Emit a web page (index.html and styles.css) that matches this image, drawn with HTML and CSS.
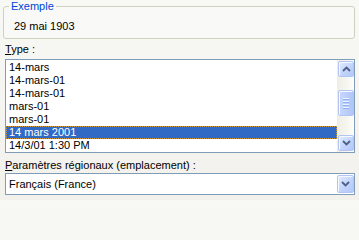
FILE: index.html
```html
<!DOCTYPE html>
<html lang="fr">
<head>
<meta charset="utf-8">
<title>Format de date</title>
<link rel="stylesheet" href="styles.css">
</head>
<body>
<div class="dlg">
  <fieldset class="sample">
    <legend>Exemple</legend>
    <div class="sample-text">29 mai 1903</div>
  </fieldset>
  <div class="label label-type"><u>T</u>ype :</div>
  <div class="listbox">
    <ul class="items">
      <li>14-mars</li>
      <li>14-mars-01</li>
      <li>14-mars-01</li>
      <li>mars-01</li>
      <li>mars-01</li>
      <li class="sel">14 mars 2001</li>
      <li>14/3/01 1:30 PM</li>
    </ul>
    <div class="vscroll">
      <div class="sbtn sbtn-up"><svg width="9" height="6" viewBox="0 0 9 6"><path d="M1 5 L4.5 1.5 L8 5" fill="none" stroke="#4d6185" stroke-width="1.8"/></svg></div>
      <div class="track">
        <div class="thumb"><span></span><span></span><span></span><span></span></div>
      </div>
      <div class="sbtn sbtn-down"><svg width="9" height="6" viewBox="0 0 9 6"><path d="M1 1 L4.5 4.5 L8 1" fill="none" stroke="#4d6185" stroke-width="1.8"/></svg></div>
    </div>
  </div>
  <div class="label label-region"><u>P</u>aramètres régionaux (emplacement) :</div>
  <div class="combo">
    <span class="combo-text">Français (France)</span>
    <div class="cbtn"><svg width="9" height="6" viewBox="0 0 9 6"><path d="M1 1 L4.5 4.5 L8 1" fill="none" stroke="#4d6185" stroke-width="1.8"/></svg></div>
  </div>
</div>
</body>
</html>
```
FILE: styles.css
```css
html, body {
  margin: 0;
  padding: 0;
}
body {
  width: 359px;
  height: 200px;
  overflow: hidden;
  background: linear-gradient(#f8f8f5, #f2f1ec);
  font-family: "Liberation Sans", Arial, sans-serif;
  font-size: 11px;
  line-height: 13px;
  color: #000;
}
.dlg {
  padding: 0 4px 0 3px;
}
.sample {
  margin: 0;
  padding: 0 0 5px 5px;
  border: 1px solid #d0d0bf;
  border-radius: 3px;
  background: #f9f9f7;
  min-width: 0;
}
.sample legend {
  padding: 0 2px;
  color: #0046d5;
  line-height: 13px;
}
.sample-text {
  padding: 7px 0 0 5px;
  height: 13px;
}
.label {
  padding-left: 2px;
  height: 13px;
}
.label-type {
  margin-top: 4px;
}
.label-region {
  margin-top: 6px;
}
.label u {
  text-decoration: underline;
  text-underline-offset: 1px;
}
.listbox {
  margin: 3px 0 0 2px;
  border: 1px solid #7f9db9;
  background: #fff;
  height: 92px;
  display: flex;
}
.items {
  list-style: none;
  margin: 0;
  padding: 1px 0 0 0;
  flex: 1;
  min-width: 0;
}
.items li {
  height: 13px;
  line-height: 13px;
  padding-left: 3px;
  white-space: nowrap;
  box-sizing: border-box;
}
.items li.sel {
  background: #316ac5;
  color: #fff;
  border: 1px dotted #d4963a;
  padding-left: 2px;
  line-height: 11px;
}
.vscroll {
  width: 17px;
  display: flex;
  flex-direction: column;
  background: linear-gradient(to right, #eeede5, #fdfdfa);
}
.sbtn {
  width: 14px;
  height: 14px;
  border: 1px solid #b2c5f3;
  border-radius: 2px;
  background: linear-gradient(135deg, #e4ecfe, #c0d2fc 60%, #b4c8f8);
  display: flex;
  align-items: center;
  justify-content: center;
  box-shadow: inset 1px 1px 0 #f4f8ff;
}
.sbtn-up {
  margin: 1px 1px 0 1px;
}
.sbtn-down {
  margin: 0 1px 1px 1px;
}
.track {
  flex: 1;
  display: flex;
  flex-direction: column;
}
.thumb {
  margin: 13px 1px 0 1px;
  width: 14px;
  height: 24px;
  border: 1px solid #b2c5f3;
  border-radius: 2px;
  background: linear-gradient(to right, #c9d8fc, #bccefb 50%, #b0c5f8);
  box-shadow: inset 1px 1px 0 #f4f8ff;
  display: flex;
  flex-direction: column;
  align-items: center;
  justify-content: center;
  gap: 1px;
}
.thumb span {
  width: 6px;
  height: 1px;
  background: #eef4fe;
  border-bottom: 1px solid #8cb0f8;
}
.combo {
  margin: 1px 0 0 2px;
  height: 20px;
  border: 1px solid #7f9db9;
  background: #fff;
  display: flex;
  align-items: center;
}
.combo-text {
  flex: 1;
  padding-left: 3px;
}
.cbtn {
  width: 15px;
  height: 16px;
  margin: 0;
  border: 1px solid #b2c5f3;
  border-radius: 2px;
  background: linear-gradient(135deg, #e4ecfe, #c0d2fc 60%, #b4c8f8);
  box-shadow: inset 1px 1px 0 #f4f8ff;
  display: flex;
  align-items: center;
  justify-content: center;
}
```
